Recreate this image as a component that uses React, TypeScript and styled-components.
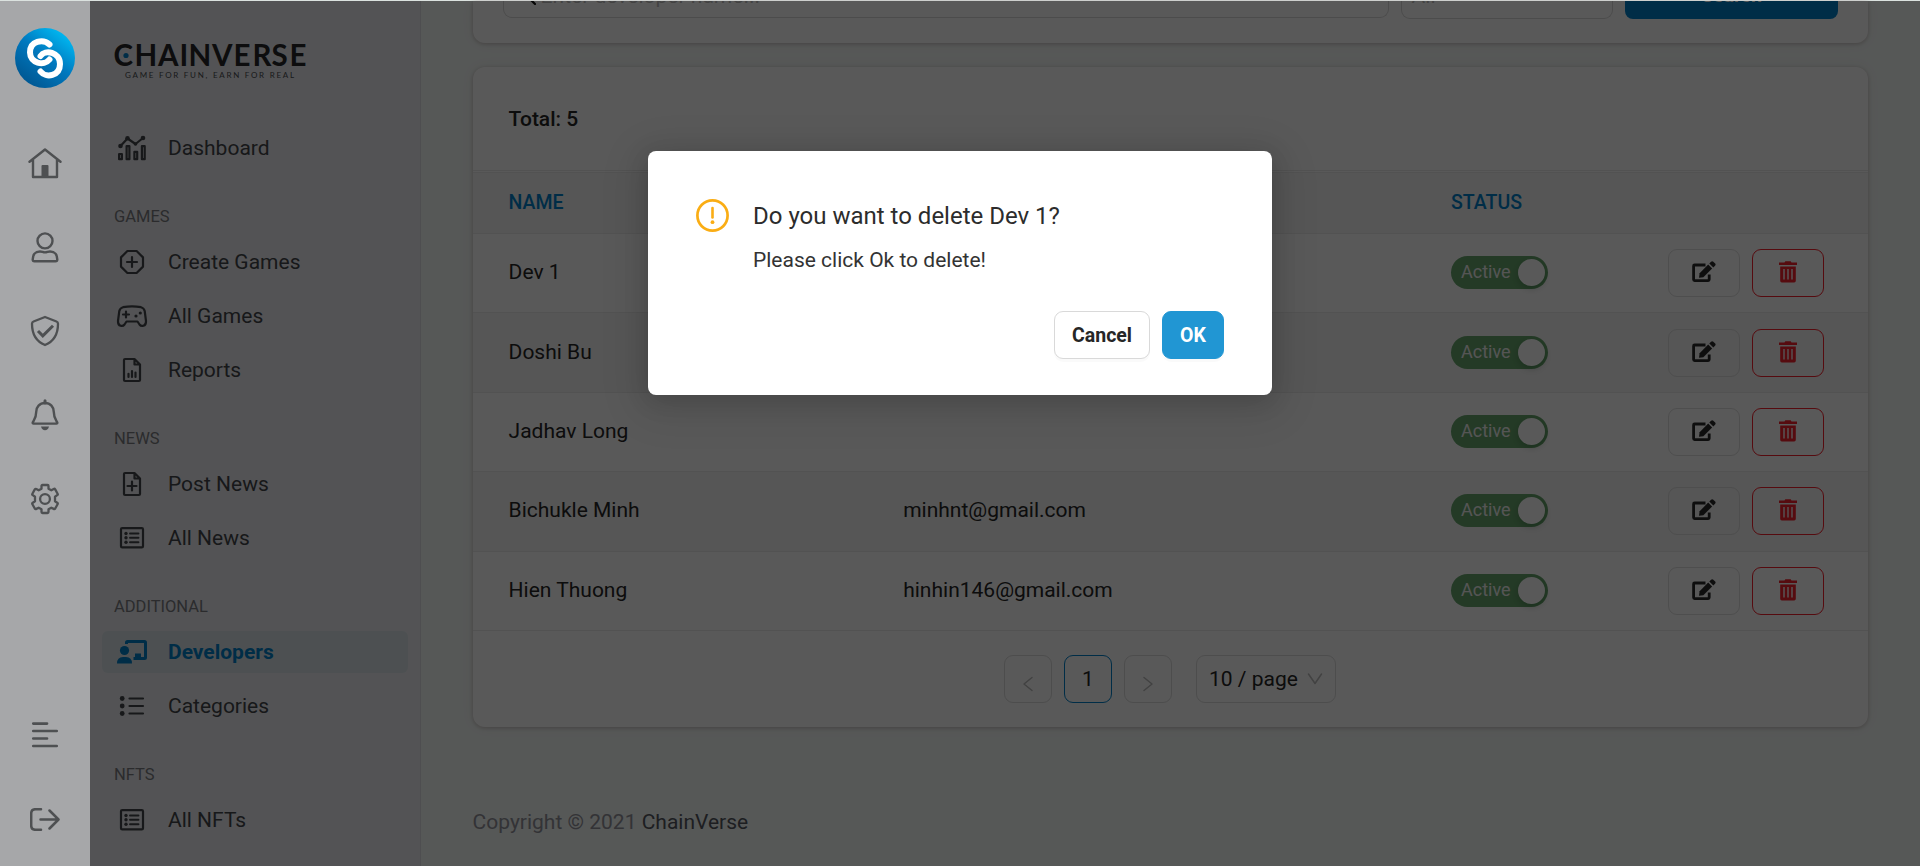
import React from 'react';
import styled, { createGlobalStyle, css } from 'styled-components';

const GlobalStyle = createGlobalStyle`
  * { box-sizing: border-box; }
  body { margin: 0; background: #f6fbf9; font-family: Roboto, sans-serif; font-size: 21px; overflow: hidden; color: #262626; }
  button { font-family: inherit; }
`;

const Page = styled.div`
  display: flex;
  height: 866px;
  padding-top: 1px;
  overflow: hidden;
  background: #dbe2df;
`;

const Overlay = styled.div`
  position: absolute;
  inset: 1px 0 0 0;
  background: rgba(0, 0, 0, 0.65);
  z-index: 1;
`;

const Rail = styled.nav`
  position: relative;
  z-index: 2;
  width: 90px;
  flex: none;
  background: #a6a7a9;
  color: #4e5052;
  display: flex;
  flex-direction: column;
  align-items: center;
  padding-top: 27px;
  svg { display: block; }
`;

const RailItem = styled.div<{ $push?: boolean }>`
  height: 84px;
  display: flex;
  align-items: center;
  justify-content: center;
  ${(p) => p.$push && css`margin-top: 152px;`}
`;

const RailIcons = styled.div`
  margin-top: 33px;
`;

const Drawer = styled.aside`
  width: 331px;
  flex: none;
  background: #edeef3;
  border-right: 1px solid #e0e0e4;
  padding-top: 41px;
  color: #44474a;
  overflow: hidden;
`;

const Brand = styled.div`
  margin-left: 24px;
  height: 85px;
  svg { display: block; overflow: visible; }
`;

const NavItem = styled.a<{ $active?: boolean }>`
  display: flex;
  align-items: center;
  height: 42px;
  margin: 0 12px 12px;
  padding-left: 12px;
  border-radius: 6px;
  svg { width: 36px; height: 30px; margin-right: 18px; flex: none; overflow: visible; }
  ${(p) =>
    p.$active &&
    css`
      background: #dce6ea;
      color: #0081cb;
      font-weight: 700;
    `}
`;

const Caption = styled.div`
  margin: 36px 24px 12px;
  line-height: 24px;
  font-size: 16.5px;
  color: #7b7d82;
`;

const Main = styled.main`
  flex: 1;
  background: #f6fbf9;
  padding: 0 52px 0 51.6px;
`;

const Card = styled.section`
  background: #fff;
  border-radius: 12px;
  box-shadow: 0 1px 4px rgba(40, 0, 0, 0.22), 0 0 14px rgba(120, 30, 30, 0.05);
`;

const FilterCard = styled(Card)`
  height: 42px;
  border-radius: 0 0 12px 12px;
  padding-left: 30px;
  display: flex;
  align-items: flex-start;
`;

const Field = styled.div<{ $w: number; $h: number }>`
  width: ${(p) => p.$w}px;
  height: ${(p) => p.$h}px;
  flex: none;
  border: 1px solid #d9d9d9;
  border-top: 0;
  border-radius: 0 0 9px 9px;
  margin-right: 12px;
  color: #bfbfbf;
  overflow: hidden;
  display: flex;
  align-items: flex-end;
  line-height: 24px;
  padding: 0 10px ${(p) => p.$h - 8}px;
  svg { margin: 0 5px 3px 2px; flex: none; color: #111; }
`;

const SearchButton = styled.div`
  width: 212.6px;
  height: 18px;
  flex: none;
  border-radius: 0 0 8px 8px;
  background: #0081cb;
  color: #fff;
  font-weight: 700;
  font-size: 19.5px;
  overflow: hidden;
  display: flex;
  align-items: flex-end;
  justify-content: center;
  line-height: 24px;
  padding-bottom: 11px;
`;

const TableCard = styled(Card)`
  margin-top: 24px;
  height: 660px;
  overflow: hidden;
`;

const Total = styled.div`
  height: 104px;
  border-bottom: 1px solid #eaeaea;
  padding: 0 36px;
  line-height: 104px;
  font-weight: 500;
`;

const Row = styled.div<{ $head?: boolean; $alt?: boolean }>`
  display: grid;
  grid-template-columns: 394.6px 547.8px 217.4px 1fr;
  align-items: center;
  padding-left: 36px;
  height: 79.4px;
  border-bottom: 1px solid #eaeaea;
  background: ${(p) => (p.$alt ? '#f5f5f5' : '#fff')};
  & > span { padding-bottom: 2px; }
  ${(p) =>
    p.$head &&
    css`
      height: 62px;
      margin-top: 1px;
      border-top: 1px solid #eaeaea;
      background: #f6f6f6;
      color: #0081cb;
      font-weight: 500;
      font-size: 19.5px;
    `}
`;

const Toggle = styled.div`
  width: 97px;
  height: 33px;
  margin-bottom: 1px;
  border-radius: 17px;
  background: #67a66d;
  color: #f4f4f4;
  font-size: 18px;
  display: flex;
  align-items: center;
  justify-content: space-between;
  padding: 0 3px 0 10px;
`;

const ToggleLabel = styled.span`
  margin-top: -2px;
`;

const Knob = styled.i`
  width: 27px;
  height: 27px;
  border-radius: 50%;
  background: #fff;
  box-shadow: 0 3px 6px rgba(0, 35, 11, 0.2);
`;

const Actions = styled.div`
  display: flex;
  gap: 12px;
`;

const ActionButton = styled.button<{ $danger?: boolean }>`
  width: 72px;
  height: 48px;
  border-radius: 9px;
  border: 1px solid ${(p) => (p.$danger ? '#f5222d' : '#dedede')};
  background: transparent;
  color: ${(p) => (p.$danger ? '#f5222d' : '#2a2a2a')};
  display: flex;
  align-items: center;
  justify-content: center;
  padding: 0 0 2px;
`;

const Pager = styled.div`
  display: flex;
  gap: 12px;
  height: 48px;
  margin: 24px 0 0 531.4px;
`;

const PageBox = styled.div<{ $current?: boolean; $w?: number }>`
  width: ${(p) => p.$w ?? 48}px;
  height: 48px;
  border: 1px solid ${(p) => (p.$current ? '#0081cb' : '#dcdcdc')};
  border-radius: 9px;
  display: flex;
  align-items: center;
  justify-content: center;
  color: #262626;
  svg { color: #bcbcbc; }
  ${(p) =>
    p.$w &&
    css`
      margin-left: 12px;
      justify-content: space-between;
      padding: 0 12px;
    `}
  & > svg.low { margin-top: 10px; }
`;

const Footer = styled.footer`
  margin-top: 83px;
  line-height: 24px;
  color: #93939b;
  b { font-weight: 400; color: #55585f; }
`;

const Dialog = styled.div`
  position: absolute;
  z-index: 3;
  left: 648px;
  top: 151px;
  width: 624px;
  height: 244px;
  background: #fff;
  border-radius: 8px;
  box-shadow: 0 9px 42px 12px rgba(0, 0, 0, 0.08), 0 5px 24px rgba(0, 0, 0, 0.16);
  padding: 48px 48px 36px;
`;

const DialogBody = styled.div`
  display: flex;
  svg { flex: none; margin: 0 24px 0 0; display: block; }
`;

const DialogTitle = styled.div`
  font-size: 24px;
  line-height: 34px;
  color: #2c2c2c;
`;

const DialogText = styled.div`
  margin-top: 11px;
  line-height: 32px;
  font-size: 21px;
  color: #333;
`;

const DialogButtons = styled.div`
  display: flex;
  justify-content: flex-end;
  gap: 12px;
  margin-top: 35px;
`;

const DialogButton = styled.button<{ $primary?: boolean }>`
  height: 48px;
  width: ${(p) => (p.$primary ? 62 : 96)}px;
  border-radius: 9px;
  border: 1px solid ${(p) => (p.$primary ? '#2196d3' : '#d9d9d9')};
  background: ${(p) => (p.$primary ? '#2196d3' : '#fff')};
  color: ${(p) => (p.$primary ? '#fff' : '#262626')};
  font-weight: 700;
  font-size: 19.5px;
  box-shadow: 0 3px 0 rgba(0, 0, 0, 0.02);
  padding: 0;
`;

const stroke = { fill: 'none', stroke: 'currentColor', strokeWidth: 2.2, strokeLinecap: 'round', strokeLinejoin: 'round' } as const;

const LogoMark = () => (
  <svg width="60" height="60" viewBox="0 0 60 60">
    <defs>
      <linearGradient id="mark" x1="0.85" y1="0.1" x2="0.25" y2="0.9">
        <stop offset="0" stopColor="#00b9f2" />
        <stop offset="0.5" stopColor="#0079bf" />
        <stop offset="1" stopColor="#005a96" />
      </linearGradient>
    </defs>
    <circle cx="30" cy="30" r="30" fill="url(#mark)" />
    <g fill="none" stroke="#fff" strokeWidth="6" strokeLinecap="round">
      <path d="M34.5 16.5C28 10.500 15 13 15 24.500C15 35 29 38.500 34.500 31.500" />
      <path d="M25.500 28C30 21 45 24 45 36C45 48 31 50.500 25.500 43.500" />
    </g>
  </svg>
);

const Home = () => (
  <svg width="34" height="31" viewBox="0 0 34 31" {...stroke} strokeWidth={2.4}>
    <path d="M1.500 13.700L17 1.500L32.500 13.700M5 11.500V29H29V11.500" />
    <path d="M13.500 29V18q0-1 1-1h5q1 0 1 1V29z" fill="currentColor" stroke="none" />
  </svg>
);
const User = () => (
  <svg width="28" height="31" viewBox="0 0 28 31" {...stroke} strokeWidth={2.4}>
    <circle cx="14" cy="8.900" r="7.500" />
    <path d="M9 19.500C11 19.500 12 20.400 14 20.400S17 19.500 19 19.500C24 19.500 26.300 23 26.300 27.500Q26.300 29.200 24.500 29.200H3.500Q1.700 29.200 1.700 27.500C1.700 23 4 19.500 9 19.500Z" />
  </svg>
);
const Shield = () => (
  <svg width="30" height="32" viewBox="0 0 30 32" {...stroke} strokeWidth={2.3}>
    <path d="M15 2L26.500 6.500Q28 7 28 8.700C28 19 23.500 26.500 15 30.000C6.500 26.500 2 19 2 8.700Q2 7 3.500 6.500Z" />
    <path d="M8 16.000L12.800 20.800L23 10.800" strokeWidth="3" strokeLinecap="butt" strokeLinejoin="miter" />
  </svg>
);
const Bell = () => (
  <svg width="28" height="32" viewBox="0 0 28 32" {...stroke} strokeWidth={2.4}>
    <path d="M14 1.800V4" strokeWidth="3" />
    <path d="M14 4C8.500 4 5.200 8 5.200 13C5.200 19 3 21 1.700 23.600Q1.500 24.600 2.500 24.600H25.500Q26.500 24.600 26.300 23.600C25 21 22.800 19 22.800 13C22.800 8 19.500 4 14 4Z" />
    <path d="M10 27.500H18Q17 31.300 14 31.300T10 27.500Z" fill="currentColor" stroke="none" />
  </svg>
);
const Gear = () => (
  <svg width="32" height="32" viewBox="0 0 32 32" {...stroke} strokeWidth={2.3}>
    <circle cx="16" cy="16" r="4.900" />
    <path d="M12.500 3Q12.500 2 13.500 2H18.500Q19.500 2 19.500 3V5.700L22.300 7.300L24.700 6Q25.600 5.500 26.200 6.400L28.600 10.700Q29.100 11.600 28.200 12.100L26 13.700V18.300L28.200 19.700Q29.100 20.300 28.600 21.200L26.200 25.500Q25.600 26.400 24.700 25.900L22.300 24.700L19.500 26.300V29Q19.500 30 18.500 30H13.500Q12.500 30 12.500 29V26.300L9.700 24.700L7.300 25.900Q6.400 26.400 5.800 25.500L3.400 21.200Q2.900 20.300 3.800 19.700L6 18.300V13.700L3.800 12.100Q2.900 11.600 3.400 10.700L5.800 6.400Q6.400 5.500 7.300 6L9.700 7.300L12.500 5.700Z" />
  </svg>
);
const Lines = () => (
  <svg width="28" height="26" viewBox="0 0 28 26" {...stroke} strokeWidth={2.700}>
    <path d="M2.300 1.600H16M2.300 9H25.700M2.300 16.500H16M2.300 24H25.700" />
  </svg>
);
const Logout = () => (
  <svg width="30" height="23" viewBox="0 0 30 23" {...stroke} strokeWidth={2.500}>
    <path d="M11 1.200H5.500Q1.200 1.200 1.200 5.500V17.500Q1.200 21.800 5.500 21.800H11M10.500 11.500H28M19.500 2.500L28.500 11.500L19.500 20.500" />
  </svg>
);

const ChartIcon = () => (
  <svg viewBox="0 0 36 30" {...stroke}>
    <path d="M6.500 13L13.500 5.500L21.500 11L29 5" />
    <g fill="currentColor" stroke="none"><circle cx="6.500" cy="13" r="2.300" /><circle cx="13.500" cy="5.300" r="2.300" /><circle cx="21.500" cy="11" r="1.800" /><circle cx="29" cy="5" r="2.300" /></g>
    <path d="M5.100 21h2.800v5.200h-2.800zM12.600 13.200h2.800v13h-2.800zM20.400 18.800h2.800v7.400h-2.800zM27.900 13.200h2.800v13h-2.800z" />
  </svg>
);
const PlusOctagon = () => (
  <svg viewBox="0 0 36 30" {...stroke}>
    <path d="M13.400 4H22.600L29 10.400V19.600L22.600 26H13.400L7 19.600V10.400ZM18 10V20M13 15H23" />
  </svg>
);
const Pad = () => (
  <svg viewBox="0 0 36 30" {...stroke}>
    <path d="M9 6.200Q18 4.600 27 6.200Q30 7 30.700 10L32 20C32.300 26 27 25.500 25.500 23.500L23.500 20.500H12.500L10.500 23.500C9 25.500 3.700 26 4 20L5.300 10Q6 7 9 6.200ZM12 10.500V16.500M9 13.500H15" />
    <circle cx="22" cy="15" r="1.600" fill="currentColor" stroke="none" /><circle cx="26.300" cy="12" r="1.600" fill="currentColor" stroke="none" />
  </svg>
);
const DocBase = ({ children }: { children: React.ReactNode }) => (
  <svg viewBox="0 0 36 30" {...stroke}>
    <path d="M11 4H20.500L26 9.500V25Q26 26 25 26H11Q10 26 10 25V5Q10 4 11 4ZM20.500 4V9.500H26" />
    {children}
  </svg>
);
const Report = () => (<DocBase><path d="M14.500 18.800V22M18 16V22M21.500 17.500V22" /></DocBase>);
const DocPlus = () => (<DocBase><path d="M18 12.500V21.500M13.500 17H22.500" /></DocBase>);
const ListBox = () => (
  <svg viewBox="0 0 36 30" {...stroke}>
    <rect x="7" y="5.100" width="22" height="19.300" rx="1.200" />
    <path d="M16 10.500H24.500M16 14.800H24.500M16 19.200H24.500" strokeWidth="1.900" />
    <g fill="currentColor" stroke="none"><circle cx="12" cy="10.500" r="1.700" /><circle cx="12" cy="14.800" r="1.700" /><circle cx="12" cy="19.200" r="1.700" /></g>
  </svg>
);
const Teacher = () => (
  <svg viewBox="0 0 36 30" fill="currentColor">
    <circle cx="10.500" cy="13.500" r="4.600" />
    <path d="M3 26.500Q3 20 9 20H12Q18 20 18 26.500Z" />
    <path d="M12.500 7V5.500Q12.500 4.500 13.500 4.500H30.500Q31.500 4.500 31.500 5.500V20.500Q31.500 21.500 30.500 21.500H19.500" fill="none" stroke="currentColor" strokeWidth="3" />
    <path d="M21 21V16.500H27V21Z" />
  </svg>
);
const ListIcon = () => (
  <svg viewBox="0 0 36 30" {...stroke}>
    <path d="M15.500 7.500H29M15.500 15H29M15.500 22.500H29" />
    <g fill="currentColor" stroke="none"><circle cx="8.200" cy="7.500" r="2.400" /><circle cx="8.200" cy="15" r="2.400" /><circle cx="8.200" cy="22.500" r="2.400" /></g>
  </svg>
);

const EditIcon = () => (
  <svg width="24" height="22" viewBox="0 0 24 22">
    <path d="M13.500 4H2.600Q1.600 4 1.600 5V18.600Q1.600 19.600 2.600 19.600H16.200Q17.200 19.600 17.200 18.600V13.500" fill="none" stroke="currentColor" strokeWidth="2.800" />
    <path d="M7 16.800L7.600 12.300L16.200 3.600L20.100 7.500L11.400 16.200Z" fill="currentColor" />
    <path d="M17.300 2.500L19.100.700Q20.200-.200 21.300.700L23.200 2.600Q24 3.600 23.200 4.600L21.300 6.400Z" fill="currentColor" />
  </svg>
);
const TrashIcon = () => (
  <svg width="18" height="22" viewBox="0 0 18 22" fill="currentColor">
    <path d="M0 1.500H5.500L6.300.300H11.700L12.500 1.500H18V4H0Z" />
    <path fillRule="evenodd" d="M1.200 5.400H16.800V19.800Q16.800 21.400 15.200 21.400H2.800Q1.200 21.400 1.200 19.800ZM4.300 8V18.600H5.700V8ZM8.300 8V18.600H9.700V8ZM12.300 8V18.600H13.700V8Z" />
  </svg>
);

const Wordmark = () => (
  <svg width="200" height="40" viewBox="0 0 200 40">
    <text x="-0.5 20.5 44 65.500 74.500 98 119.500 138.500 157.500 175.500" y="24" fontFamily="Lato, sans-serif" fontWeight="700" fontSize="29.500" fill="#262628">CHAINVERSE</text>
    <circle cx="12" cy="13.500" r="2.600" fill="#0081cb" />
    <text x="11" y="36" fontFamily="Lato, sans-serif" fontSize="8" textLength="169" fill="#4a4d50">GAME FOR FUN, EARN FOR REAL</text>
  </svg>
);

const developers = [
  { name: 'Dev 1', email: '' },
  { name: 'Doshi Bu', email: '' },
  { name: 'Jadhav Long', email: '' },
  { name: 'Bichukle Minh', email: 'minhnt@gmail.com' },
  { name: 'Hien Thuong', email: 'hinhin146@gmail.com' },
];

export default function App() {
  return (
    <>
      <GlobalStyle />
      <Page>
        <Rail>
          <LogoMark />
          <RailIcons>
            <RailItem><Home /></RailItem>
            <RailItem><User /></RailItem>
            <RailItem><Shield /></RailItem>
            <RailItem><Bell /></RailItem>
            <RailItem><Gear /></RailItem>
            <RailItem $push><Lines /></RailItem>
            <RailItem><Logout /></RailItem>
          </RailIcons>
        </Rail>
        <Drawer>
          <Brand><Wordmark /></Brand>
          <NavItem><ChartIcon />Dashboard</NavItem>
          <Caption>GAMES</Caption>
          <NavItem><PlusOctagon />Create Games</NavItem>
          <NavItem><Pad />All Games</NavItem>
          <NavItem><Report />Reports</NavItem>
          <Caption>NEWS</Caption>
          <NavItem><DocPlus />Post News</NavItem>
          <NavItem><ListBox />All News</NavItem>
          <Caption>ADDITIONAL</Caption>
          <NavItem $active><Teacher />Developers</NavItem>
          <NavItem><ListIcon />Categories</NavItem>
          <Caption>NFTS</Caption>
          <NavItem><ListBox />All NFTs</NavItem>
        </Drawer>
        <Main>
          <FilterCard>
            <Field $w={886} $h={17}>
              <svg width="20" height="20" viewBox="0 0 20 20" {...stroke}><circle cx="8" cy="8" r="5.500" /><path d="M13.500 13.500L19 19" /></svg>
              Enter developer name...
            </Field>
            <Field $w={212.6} $h={18}>All</Field>
            <SearchButton>Search</SearchButton>
          </FilterCard>
          <TableCard>
            <Total>Total: 5</Total>
            <Row $head><span>NAME</span><span /><span>STATUS</span></Row>
            {developers.map((d, i) => (
              <Row key={d.name} $alt={i % 2 === 1}>
                <span>{d.name}</span>
                <span>{d.email}</span>
                <Toggle><ToggleLabel>Active</ToggleLabel><Knob /></Toggle>
                <Actions>
                  <ActionButton><EditIcon /></ActionButton>
                  <ActionButton $danger><TrashIcon /></ActionButton>
                </Actions>
              </Row>
            ))}
            <Pager>
              <PageBox><svg className="low" width="12" height="16" viewBox="0 0 12 16" {...stroke} strokeWidth={1.500}><path d="M10 1.500L2 8L10 14.500" /></svg></PageBox>
              <PageBox $current>1</PageBox>
              <PageBox><svg className="low" width="12" height="16" viewBox="0 0 12 16" {...stroke} strokeWidth={1.500}><path d="M2 1.500L10 8L2 14.500" /></svg></PageBox>
              <PageBox $w={140}>10 / page<svg width="16" height="12" viewBox="0 0 16 12" {...stroke} strokeWidth={1.500}><path d="M1.500 1L8 10.500L14.500 1" /></svg></PageBox>
            </Pager>
          </TableCard>
          <Footer>Copyright © 2021 <b>ChainVerse</b></Footer>
        </Main>
      </Page>
      <Overlay />
      <Dialog>
        <DialogBody>
          <svg width="33" height="33" viewBox="0 0 33 33"><circle cx="16.500" cy="16.500" r="15.100" fill="none" stroke="#faad14" strokeWidth="2.700" /><path d="M16.500 9V18.500" stroke="#faad14" strokeWidth="2.600" strokeLinecap="round" /><circle cx="16.500" cy="23.200" r="1.900" fill="#faad14" /></svg>
          <div>
            <DialogTitle>Do you want to delete Dev 1?</DialogTitle>
            <DialogText>Please click Ok to delete!</DialogText>
          </div>
        </DialogBody>
        <DialogButtons>
          <DialogButton>Cancel</DialogButton>
          <DialogButton $primary>OK</DialogButton>
        </DialogButtons>
      </Dialog>
    </>
  );
}
